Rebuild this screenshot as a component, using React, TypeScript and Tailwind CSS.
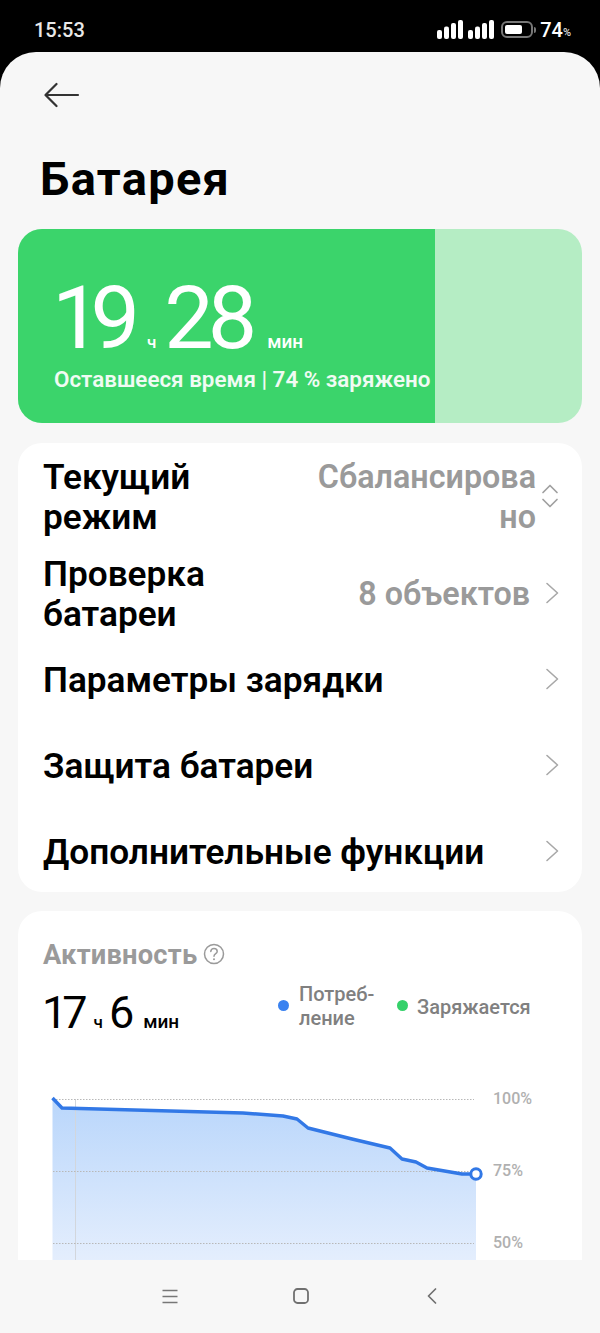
import React from "react";

const Chevron = () => (
  <svg width="14" height="22" viewBox="0 0 14 22" fill="none" className="shrink-0">
    <path d="M2 1.5 L12.5 11 L2 20.5" stroke="#a8a8a8" strokeWidth="1.6" strokeLinecap="round" strokeLinejoin="round" />
  </svg>
);

const Signal = () => (
  <svg width="26" height="19" viewBox="0 0 26 19" fill="white" className="block">
    <rect x="0" y="10" width="5" height="9" rx="2" />
    <rect x="7" y="6.5" width="5" height="12.5" rx="2" />
    <rect x="14" y="3" width="5" height="16" rx="2" />
    <rect x="21" y="0" width="5" height="19" rx="2" />
  </svg>
);

const Row = ({ label, value }: { label: React.ReactNode; value?: string }) => (
  <div className="flex items-center justify-between h-[80px] leading-[40px]">
    <span className="text-[35.2px] font-semibold text-black">{label}</span>
    <span className="flex items-center">
      {value && <span className="text-[32.3px] font-semibold text-[#9a9a9a]">{value}</span>}
      <span className="ml-[15px] mr-[-1px] mt-[-2px] flex">
        <Chevron />
      </span>
    </span>
  </div>
);

export default function App() {
  return (
    <div className="w-[600px] h-[1333px] bg-black flex flex-col overflow-hidden font-['Roboto',sans-serif]">
      <div className="h-[52px] shrink-0 flex items-center justify-between pl-[34px] pr-[29px] text-white">
        <span className="text-[20px] font-medium leading-none mt-[7px] text-[#e8e8e8]">15:53</span>
        <div className="flex items-center mt-[7px]">
          <Signal />
          <span className="ml-[5px] flex">
            <Signal />
          </span>
          <div className="ml-[7px] w-[32px] h-[17px] rounded-[6px] border-2 border-[#777] p-[2px]">
            <div className="h-full w-[17px] bg-white rounded-[2px]" />
          </div>
          <span className="ml-[1px] w-[2px] h-[6px] bg-[#777] rounded-r-full" />
          <span className="ml-[4px] text-[20px] font-medium leading-none">74</span>
          <span className="text-[11px] font-medium leading-none mt-[6px] text-[#ddd]">%</span>
        </div>
      </div>

      <div className="flex-1 min-h-0 bg-[#f7f7f7] rounded-t-[36px] flex flex-col overflow-hidden">
        <div className="flex-1 min-h-0 overflow-hidden">
          <div className="pl-[44px] pt-[30px]">
            <svg width="36" height="26" viewBox="0 0 36 26" fill="none" className="block">
              <path d="M34 13 H2 M12.5 2 L1.5 13 L12.5 24" stroke="#333" strokeWidth="2.2" strokeLinecap="round" strokeLinejoin="round" />
            </svg>
          </div>
          <h1 className="pl-[40px] mt-[43px] text-[47px] tracking-[1.3px] leading-[56px] font-bold text-black">Батарея</h1>

          <div className="mx-[18px] mt-[22px] h-[194px] rounded-[24px] bg-[#b5edc4] overflow-hidden">
            <div className="w-[417px] h-full bg-[#3bd46b] pl-[36px] pt-[45px] text-white">
              <div className="flex items-baseline h-[88px] leading-[88px]">
                <span className="text-[88px] tracking-[-11px] ml-[-2px]">19</span>
                <span className="text-[17px] font-medium ml-[18px]">ч</span>
                <span className="text-[88px] tracking-[-6px] ml-[8px]">28</span>
                <span className="text-[19px] font-medium ml-[16px]">мин</span>
              </div>
              <div className="mt-[3px] text-[22.4px] leading-[28px] font-semibold whitespace-nowrap text-[#f0fbf3]">
                Оставшееся время | 74 % заряжено
              </div>
            </div>
          </div>

          <div className="mx-[18px] mt-[20px] bg-white rounded-[24px] pl-[25px] pr-[24px] pt-[14px] flex flex-col gap-[6px]">
            <div className="flex items-center justify-between h-[80px] mb-[11px] leading-[40px]">
              <span className="text-[35.2px] font-semibold text-black">
                Текущий
                <br />
                режим
              </span>
              <span className="flex items-center">
                <span className="text-[32.3px] font-semibold text-[#9a9a9a] text-right">
                  Сбалансирова
                  <br />
                  но
                </span>
                <svg width="18" height="24" viewBox="0 0 18 24" fill="none" className="ml-[5px] mr-[-1px] mt-[-2px]">
                  <path d="M2 8.5 L9 1.5 L16 8.5 M2 15.5 L9 22.5 L16 15.5" stroke="#a0a0a0" strokeWidth="1.7" strokeLinecap="round" strokeLinejoin="round" />
                </svg>
              </span>
            </div>
            <Row
              label={
                <>
                  Проверка
                  <br />
                  батареи
                </>
              }
              value="8 объектов"
            />
            <Row label="Параметры зарядки" />
            <Row label="Защита батареи" />
            <Row label="Дополнительные функции" />
          </div>

          <div className="mx-[18px] mt-[19px] bg-white rounded-t-[24px] h-[400px]">
            <div className="pl-[25px] pt-[28px] flex items-center h-[60px]">
              <span className="text-[27.3px] tracking-[0.2px] leading-[32px] font-bold text-[#9a9a9a]">Активность</span>
              <svg width="22" height="22" viewBox="0 0 22 22" fill="none" className="ml-[6px] mt-[-3px]">
                <circle cx="11" cy="11" r="9.5" stroke="#9a9a9a" strokeWidth="1.5" />
                <path d="M7.8 8.6 C7.8 6.7 9.2 5.6 11 5.6 C12.8 5.6 14.2 6.8 14.2 8.4 C14.2 10.6 11 10.6 11 13.2" stroke="#9a9a9a" strokeWidth="1.5" strokeLinecap="round" />
                <circle cx="11" cy="16.2" r="1" fill="#9a9a9a" />
              </svg>
            </div>
            <div className="flex items-start pl-[25px] mt-[17px]">
              <div className="flex items-baseline w-[235px] text-black h-[50px] leading-[50px]">
                <span className="text-[45px] tracking-[-5px] ml-[-1px]">17</span>
                <span className="text-[17px] font-medium ml-[11px]">ч</span>
                <span className="text-[45px] ml-[6px]">6</span>
                <span className="text-[19px] font-medium ml-[9px]">мин</span>
              </div>
              <div className="flex items-center mt-[-6px] text-[20px] leading-[24px] font-medium text-[#808080]">
                <span className="w-[11px] h-[11px] rounded-full bg-[#3a82f0] shrink-0 mb-[2px]" />
                <span className="ml-[10px] w-[98px]">
                  Потреб-
                  <br />
                  ление
                </span>
                <span className="w-[11px] h-[11px] rounded-full bg-[#35d16a] shrink-0 mb-[2px]" />
                <span className="ml-[9px] mt-[1px] whitespace-nowrap">Заряжается</span>
              </div>
            </div>

            <div className="flex mt-[52px] pl-[30px]">
              <svg width="438" height="170" viewBox="48 1090 438 170" fill="none" className="block shrink-0">
                <defs>
                  <linearGradient id="area" x1="0" y1="0" x2="0" y2="1">
                    <stop offset="0" stopColor="#b9d6fb" />
                    <stop offset="1" stopColor="#e4eefd" />
                  </linearGradient>
                </defs>
                <path
                  d="M52.5 1098 L62 1108 L243 1113 L283 1116 L297 1119 L308 1128 L352 1139 L390 1148 L402 1159 L416 1162 L427 1168 L462 1174 L476 1174 L476 1260 L52.5 1260 Z"
                  fill="url(#area)"
                />
                <path d="M75.5 1099 V1260" stroke="#d2d6dc" strokeWidth="1" />
                <path d="M53 1099.5 H474 M53 1171.5 H474 M53 1243.5 H474" stroke="#b8b8b8" strokeWidth="1" strokeDasharray="1.5 1.5" />
                <path
                  d="M52.5 1098 L62 1108 L243 1113 L283 1116 L297 1119 L308 1128 L352 1139 L390 1148 L402 1159 L416 1162 L427 1168 L462 1174 L476 1174"
                  stroke="#3278e6"
                  strokeWidth="3.4"
                  strokeLinejoin="round"
                />
                <circle cx="476" cy="1174" r="5.2" fill="white" stroke="#3278e6" strokeWidth="3" />
              </svg>
              <div className="ml-[7px] mt-[-3px] flex flex-col gap-[48px] text-[16px] leading-[24px] font-medium text-[#b0b0b0]">
                <span>100%</span>
                <span>75%</span>
                <span>50%</span>
              </div>
            </div>
          </div>
        </div>

        <div className="h-[73px] shrink-0 bg-[#f7f7f7] flex items-center pb-[1px]">
          <div className="w-full flex items-center justify-between pl-[162px] pr-[163px]">
            <svg width="16" height="15" viewBox="0 0 16 15" fill="none">
              <path d="M0.5 1.5 H15.5 M0.5 7.5 H15.5 M0.5 13.5 H15.5" stroke="#777" strokeWidth="1.7" />
            </svg>
            <svg width="16" height="16" viewBox="0 0 16 16" fill="none" className="ml-[-3px]">
              <rect x="1" y="1" width="14" height="14" rx="3.5" stroke="#707070" strokeWidth="1.8" />
            </svg>
            <svg width="10" height="16" viewBox="0 0 10 16" fill="none">
              <path d="M8.5 1 L1.5 8 L8.5 15" stroke="#707070" strokeWidth="1.7" strokeLinecap="round" strokeLinejoin="round" />
            </svg>
          </div>
        </div>
      </div>
    </div>
  );
}
